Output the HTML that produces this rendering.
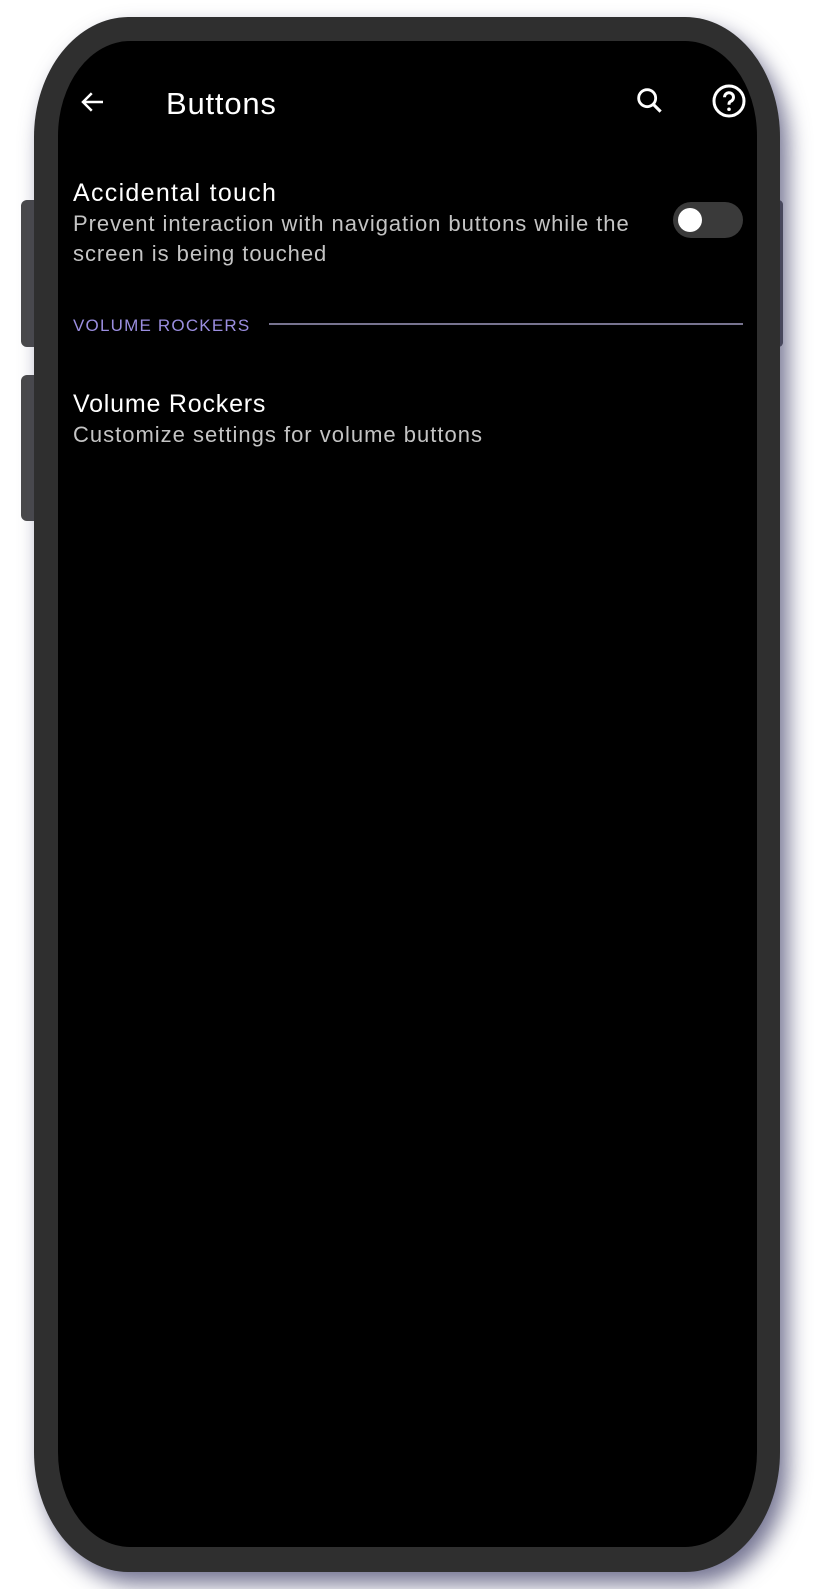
<!DOCTYPE html>
<html><head><style>
body{margin:0;width:817px;height:1589px;background:#fff;position:relative;overflow:hidden;font-family:"Liberation Sans",sans-serif}
.btn{position:absolute;background:#4a4a4a;border-radius:6px}
.frame{position:absolute;left:34px;top:17px;width:746px;height:1555px;background:#2f2f2f;border-radius:95px/120px;box-shadow:8px 12px 22px rgba(70,70,110,.75)}
.screen{position:absolute;left:58px;top:41px;width:699px;height:1506px;background:#000;border-radius:72px/95px;overflow:hidden}
.t{position:absolute;white-space:nowrap}
</style></head><body>
<div class="btn" style="left:21px;top:200px;width:20px;height:147px"></div>
<div class="btn" style="left:21px;top:375px;width:20px;height:146px"></div>
<div class="btn" style="left:774px;top:200px;width:9px;height:147px"></div>
<div class="frame"></div>
<div class="screen">
<svg style="position:absolute;left:20px;top:46px" width="30" height="30" viewBox="0 0 24 24"><path d="M20 12H5M11 5l-7 7 7 7" stroke="#fff" stroke-width="2" fill="none"/></svg>
<div class="t" style="left:108px;top:45px;font-size:31px;color:#fff;letter-spacing:0.8px">Buttons</div>
<svg style="position:absolute;left:575px;top:43px" width="34" height="34" viewBox="0 0 24 24"><circle cx="10" cy="10" r="6" stroke="#fff" stroke-width="2" fill="none"/><path d="M14.5 14.5l5 5" stroke="#fff" stroke-width="2.2"/></svg>
<svg style="position:absolute;left:653px;top:42px" width="36" height="36" viewBox="0 0 24 24"><circle cx="12" cy="12" r="10" stroke="#fff" stroke-width="2" fill="none"/><path d="M9 9.5a3 3 0 1 1 4 2.8c-1 .5-1 1.2-1 2.2" stroke="#fff" stroke-width="2" fill="none"/><circle cx="12" cy="17.5" r="1.2" fill="#fff"/></svg>
<div class="t" style="left:15px;top:138px;font-size:25px;color:#fff;letter-spacing:1.3px">Accidental touch</div>
<div class="t" style="left:15px;top:168px;font-size:22px;color:#c4c4c4;line-height:30px;letter-spacing:0.95px">Prevent interaction with navigation buttons while the<br>screen is being touched</div>
<div style="position:absolute;left:605px;top:161px;width:70px;height:36px;border-radius:18px;background:#3a3a3a;left:605px"></div>
<div style="position:absolute;left:620px;top:167px;width:24px;height:24px;border-radius:50%;background:#fff"></div>
<div class="t" style="left:15px;top:275px;font-size:17px;color:#9b8ee0;letter-spacing:1.2px">VOLUME ROCKERS</div>
<div style="position:absolute;left:211px;top:282px;width:464px;height:2px;background:#77738f"></div>
<div class="t" style="left:15px;top:349px;font-size:25px;color:#fff;letter-spacing:0.8px">Volume Rockers</div>
<div class="t" style="left:15px;top:381px;font-size:22px;color:#c4c4c4;letter-spacing:1px">Customize settings for volume buttons</div>
</div>
<style>.screen>div:nth-of-type(4){left:615px!important}.screen>div:nth-of-type(7){width:474px!important}</style>
</body></html>
